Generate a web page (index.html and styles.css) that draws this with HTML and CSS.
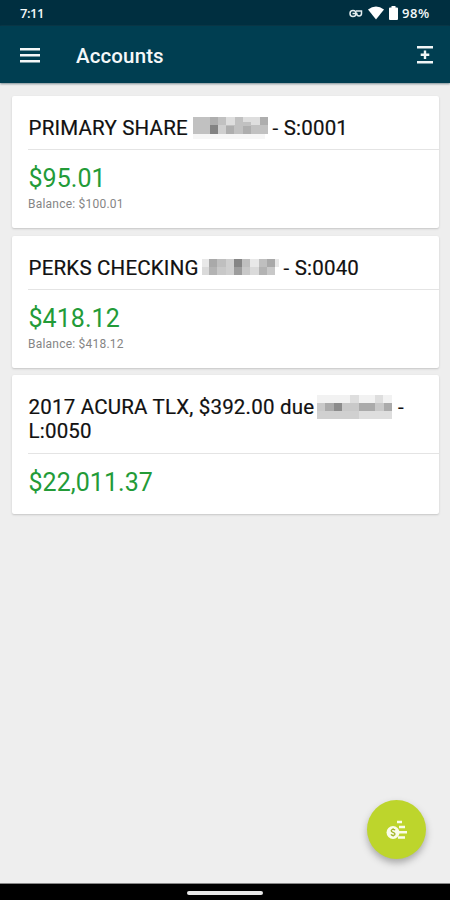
FILE: index.html
```
<!DOCTYPE html>
<html lang="en">
<head>
<meta charset="utf-8">
<title>Accounts</title>
<link rel="stylesheet" href="styles.css">
</head>
<body>
<div class="screen">
  <header class="status">
    <span class="clock">7:11</span>
    <div class="indicators">
      <svg class="key" width="14" height="9" viewBox="0 0 14 9" fill="none" stroke="#e4edef" stroke-width="1.5"><circle cx="4" cy="4.5" r="3"/><path d="M3.500 4.500h5M7 2h5.500v2.500a2.300 2.300 0 0 1-4.800 0"/></svg>
      <svg class="wifi" width="16" height="14" viewBox="0 0 16 14"><path d="M0 3.500Q8-2.500 16 3.500L8 13.500Z" fill="#fff"/></svg>
      <svg class="battery" width="9" height="14" viewBox="0 0 9 14"><path d="M2.500 0h4v1.500H8q1 0 1 1V13q0 1-1 1H1q-1 0-1-1V2.500q0-1 1-1h1.500Z" fill="#fff"/></svg>
      <span class="percent">98%</span>
    </div>
  </header>
  <nav class="toolbar">
    <svg class="menu" width="20" height="15" viewBox="0 0 20 15" fill="#f4f7f8"><path d="M0 0h20v2.500H0zM0 6h20v2.500H0zM0 12h20v2.500H0z"/></svg>
    <h1>Accounts</h1>
    <svg class="expand" width="16" height="18" viewBox="0 0 16 18" fill="#f0f5f6"><path d="M0 0h16v2.600H0zM0 15h16v2.600H0zM6.800 4.500h2.400v3.100h3.100V10H9.200v3.100H6.800V10H3.700V7.600h3.100z"/></svg>
  </nav>
  <main class="accounts">
    <section class="card">
      <h2><span class="name primary">PRIMARY SHARE</span><svg class="mask" width="75" height="24" viewBox="0 0 75 24" shape-rendering="crispEdges"><path fill="#c1c1c1" d="M0 1h75v17H0z"/><path fill="#f6f6f6" d="M0 18h72v5H0z"/><path fill="#aeaeae" d="M17 1h8v8h-8zM67 1h8v8h-8zM33 10h8v8h-8zM50 10h8v8h-8z"/><path fill="#838383" d="M17 9h8v9h-8z"/><path fill="#dedede" d="M33 1h9v8h-9zM50 1h17v5H50zM58 6h9v3h-9z"/><path fill="#cfcfcf" d="M25 9h8v9h-8z"/></svg><span class="suffix">- S:0001</span></h2>
      <div class="amounts"><p class="available">$95.01</p><p class="balance">Balance: $100.01</p></div>
    </section>
    <section class="card second">
      <h2><span class="name checking">PERKS CHECKING</span><svg class="mask" width="77" height="24" viewBox="0 0 77 24" shape-rendering="crispEdges"><path fill="#e8e8e8" d="M0 3h77v8H0z"/><path fill="#c8c8c8" d="M0 11h73v8H0z"/><path fill="#a9a9a9" d="M7 3h8v8H7zM65 3h8v8h-8z"/><path fill="#b3b3b3" d="M7 11h8v8H7zM57 11h8v8h-8z"/><path fill="#bfbfbf" d="M15 3h16v8H15zM40 3h8v8h-8zM57 3h8v8h-8z"/><path fill="#858585" d="M32 3h8v8h-8z"/><path fill="#9c9c9c" d="M32 11h8v8h-8z"/><path fill="#cfcfcf" d="M24 3h8v16h-8z"/><path fill="#dadada" d="M48 11h9v8h-9zM0 11h7v8H0z"/></svg><span class="suffix">- S:0040</span></h2>
      <div class="amounts"><p class="available">$418.12</p><p class="balance">Balance: $418.12</p></div>
    </section>
    <section class="card loan">
      <h2><span class="name acura">2017 ACURA TLX, $392.00 due</span><svg class="mask" width="75" height="24" viewBox="0 0 75 24" shape-rendering="crispEdges"><path fill="#f2f2f2" d="M0 0h75v8H0z"/><path fill="#c9c9c9" d="M0 8h75v8H0z"/><path fill="#d0d0d0" d="M0 16h42v8H0z"/><path fill="#dedede" d="M42 16h33v8H42zM33 0h9v8h-9zM58 0h8v8h-8z"/><path fill="#ababab" d="M8 8h9v8H8zM42 8h16v8H42zM67 8h8v8h-8z"/><path fill="#8c8c8c" d="M17 8h8v8h-8z"/></svg><span class="suffix dash">-</span><span class="name loan-id">L:0050</span></h2>
      <div class="amounts"><p class="available">$22,011.37</p></div>
    </section>
  </main>
  <button class="fab" aria-label="Transfer">
    <svg width="22" height="20" viewBox="0 0 22 20"><path d="M11 .8h5v2.500h-5zM13 5.800h6v2.500h-6zM13 11h8v2.500h-8zM12 16.200h7v2.500h-7z" fill="#fafde9"/><circle cx="7" cy="12.500" r="6.500" fill="#fafde9"/><path d="M9 10.200C8.300 8.900 5.200 9 5.200 10.800s3.800 1.300 3.800 3.200-3.200 1.900-4 .4M7.100 8.200v1.200M7.100 15.300v1.300" stroke="#a2b526" stroke-width="1.300" fill="none"/></svg>
  </button>
  <footer class="navbar"><span></span></footer>
</div>
</body>
</html>
```
FILE: styles.css
```
* { box-sizing: border-box; }
body, h1, h2, p { margin: 0; }
body { background: #eee; font-family: Roboto, "Liberation Sans", sans-serif; }
svg { display: block; flex: none; }
.screen { position: relative; width: 450px; height: 900px; display: flex; flex-direction: column; overflow: hidden; }
.status { height: 26px; flex: none; background: #002f40; color: #f4f8f9; display: flex; justify-content: space-between; padding: 0 19px 0 20px; align-items: center; font: 600 13px/26px "Open Sans", sans-serif; }
.clock, .percent { white-space: nowrap; }
.clock { letter-spacing: -.5px; }
.indicators { display: flex; align-items: center; }
.wifi { margin-left: 5px; }
.battery { margin-left: 5px; }
.percent { margin-left: 4px; width: 29px; letter-spacing: .6px; }
.toolbar { height: 57px; flex: none; background: #003e51; display: flex; align-items: center; padding: 1px 17px 0 20px; box-shadow: 0 1px 2px #7d8d93; z-index: 1; }
.toolbar h1 { margin-left: 36px; padding-top: 1px; font-size: 20.5px; line-height: 24px; font-weight: 500; letter-spacing: .12px; color: #f5f8f9; }
.expand { margin-left: auto; }
.accounts { flex: 1; padding: 13px 11px 0 12px; display: flex; flex-direction: column; }
.card { height: 132px; margin-bottom: 8px; background: #fff; border-radius: 2px; box-shadow: 0 1px 2px #c5c5c5; flex: none; }
.second { margin-bottom: 7px; }
.loan { height: 139px; }
.card h2 { margin-left: 16px; height: 54px; padding-top: 20px; border-bottom: 1.5px solid #e4e4e4; display: flex; flex-wrap: wrap; align-content: flex-start; font-size: 20.5px; line-height: 24px; font-weight: 400; letter-spacing: .2px; color: #111; -webkit-text-stroke: .2px #111; }
.loan h2 { height: 79px; padding-top: 20px; }
.name, .suffix { white-space: nowrap; }
.name { padding-left: .5px; }
.primary { width: 165px; }
.checking { width: 174px; }
.acura { width: 289px; }
.loan-id { flex-basis: 100%; }
.suffix { margin-left: 4.5px; }
.dash { margin-left: 6px; }
.amounts { padding: 14px 0 0 16px; }
.available { padding-left: .5px; font-size: 25px; line-height: 30px; letter-spacing: .05px; color: #239b38; }
.balance { margin-top: 3px; font-size: 12px; line-height: 14px; color: #858585; letter-spacing: .22px; }
.fab { position: absolute; left: 367px; top: 800px; width: 59px; height: 59px; border: 0; border-radius: 50%; background: #bdd52c; box-shadow: 0 4px 7px #aaa; display: grid; place-items: center; padding: 0; }
.navbar { height: 17px; flex: none; background: #000; border-top: 1px solid #888; display: flex; justify-content: center; padding-top: 7px; }
.navbar span { width: 76px; height: 4px; border-radius: 2px; background: #e8e8e8; }
```
